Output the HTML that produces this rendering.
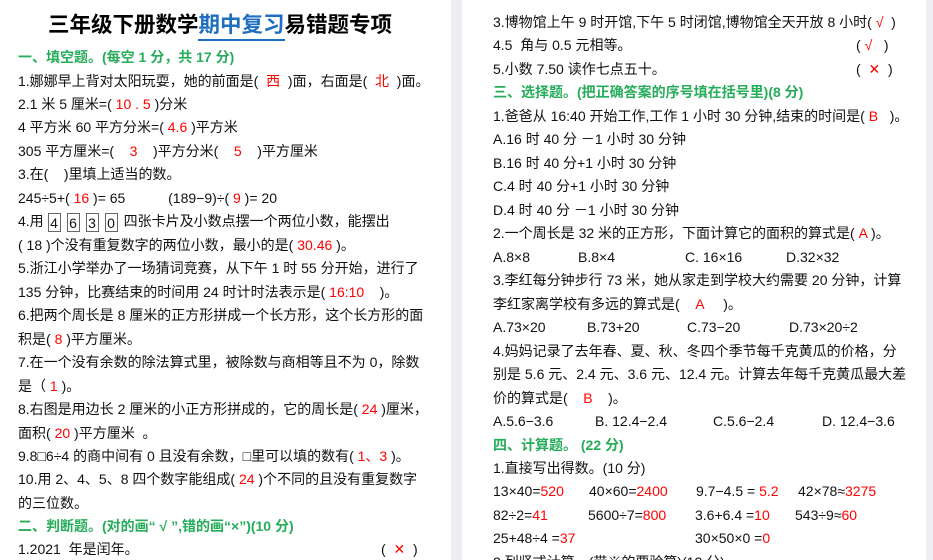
<!DOCTYPE html>
<html><head><meta charset="utf-8"><style>
*{margin:0;padding:0;box-sizing:border-box}
html,body{width:933px;height:560px;overflow:hidden}
body{background:#eeeef2;font-family:"Liberation Sans","Noto Sans CJK SC",sans-serif;font-size:14px;color:#111;position:relative}
.pg{position:absolute;top:0;height:560px;background:#fff}
.l{position:absolute;white-space:pre;line-height:24px;height:24px}
.r{color:#f00}
.g{color:#25ad5a;font-weight:bold}
.card{display:inline-block;border:1px solid #666;width:13px;height:19px;line-height:18px;text-align:center;vertical-align:middle;margin-right:6px}
h1{position:absolute;left:0;width:440px;top:8px;text-align:center;font-size:21.5px;font-weight:bold;line-height:32px;font-family:"Noto Sans CJK SC",sans-serif;color:#000}
h1 span{color:#1f6fc0;border-bottom:2px solid #1f6fc0}
</style></head><body>
<div class="pg" style="left:0;width:451px"></div>
<div class="pg" style="left:462px;width:464px"></div>
<h1>三年级下册数学<span>期中复习</span>易错题专项</h1>
<div class="l g" style="left:18px;top:45px">一、填空题。(每空 1 分，共 17 分)</div>
<div class="l" style="left:18px;top:69px">1.娜娜早上背对太阳玩耍，她的前面是(  <span class="r">西</span>  )面，右面是(  <span class="r">北</span>  )面。</div>
<div class="l" style="left:18px;top:92px">2.1 米 5 厘米=( <span class="r">10 . 5</span> )分米</div>
<div class="l" style="left:18px;top:115px">4 平方米 60 平方分米=( <span class="r">4.6</span> )平方米</div>
<div class="l" style="left:18px;top:139px">305 平方厘米=(    <span class="r">3</span>    )平方分米(    <span class="r">5</span>    )平方厘米</div>
<div class="l" style="left:18px;top:162px">3.在(    )里填上适当的数。</div>
<div class="l" style="left:18px;top:186px">245÷5+( <span class="r">16</span> )= 65           (189−9)÷( <span class="r">9</span> )= 20</div>
<div class="l" style="left:18px;top:209px">4.用 <span class="card">4</span><span class="card">6</span><span class="card">3</span><span class="card">0</span>四张卡片及小数点摆一个两位小数，能摆出</div>
<div class="l" style="left:18px;top:233px">( 18 )个没有重复数字的两位小数，最小的是( <span class="r">30.46</span> )。</div>
<div class="l" style="left:18px;top:256px">5.浙江小学举办了一场猜词竞赛，从下午 1 时 55 分开始，进行了</div>
<div class="l" style="left:18px;top:280px">135 分钟，比赛结束的时间用 24 时计时法表示是( <span class="r">16:10</span>    )。</div>
<div class="l" style="left:18px;top:303px">6.把两个周长是 8 厘米的正方形拼成一个长方形，这个长方形的面</div>
<div class="l" style="left:18px;top:327px">积是( <span class="r">8</span> )平方厘米。</div>
<div class="l" style="left:18px;top:350px">7.在一个没有余数的除法算式里，被除数与商相等且不为 0，除数</div>
<div class="l" style="left:18px;top:374px">是（ <span class="r">1</span> )。</div>
<div class="l" style="left:18px;top:397px">8.右图是用边长 2 厘米的小正方形拼成的，它的周长是( <span class="r">24</span> )厘米，</div>
<div class="l" style="left:18px;top:421px">面积( <span class="r">20</span> )平方厘米  。</div>
<div class="l" style="left:18px;top:444px">9.8□6÷4 的商中间有 0 且没有余数，□里可以填的数有( <span class="r">1、3</span> )。</div>
<div class="l" style="left:18px;top:467px">10.用 2、4、5、8 四个数字能组成( <span class="r">24</span> )个不同的且没有重复数字</div>
<div class="l" style="left:18px;top:491px">的三位数。</div>
<div class="l g" style="left:18px;top:514px">二、判断题。(对的画“ √ ”,错的画“×”)(10 分)</div>
<div class="l" style="left:18px;top:537px">1.2021  年是闰年。</div>
<div class="l" style="left:381px;top:537px">(  <span class="r">✕</span>  )</div>

<div class="l" style="left:493px;top:10px">3.博物馆上午 9 时开馆,下午 5 时闭馆,博物馆全天开放 8 小时( <span class="r">√</span>  )</div>
<div class="l" style="left:493px;top:33px">4.5  角与 0.5 元相等。</div>
<div class="l" style="left:856px;top:33px">( <span class="r">√</span>   )</div>
<div class="l" style="left:493px;top:57px">5.小数 7.50 读作七点五十。</div>
<div class="l" style="left:856px;top:57px">(  <span class="r">✕</span>  )</div>
<div class="l g" style="left:493px;top:80px">三、选择题。(把正确答案的序号填在括号里)(8 分)</div>
<div class="l" style="left:493px;top:104px">1.爸爸从 16:40 开始工作,工作 1 小时 30 分钟,结束的时间是( <span class="r">B</span>   )。</div>
<div class="l" style="left:493px;top:127px">A.16 时 40 分 －1 小时 30 分钟</div>
<div class="l" style="left:493px;top:151px">B.16 时 40 分+1 小时 30 分钟</div>
<div class="l" style="left:493px;top:174px">C.4 时 40 分+1 小时 30 分钟</div>
<div class="l" style="left:493px;top:198px">D.4 时 40 分 －1 小时 30 分钟</div>
<div class="l" style="left:493px;top:221px">2.一个周长是 32 米的正方形，下面计算它的面积的算式是( <span class="r">A</span> )。</div>
<div class="l" style="left:493px;top:245px">A.8×8</div><div class="l" style="left:578px;top:245px">B.8×4</div><div class="l" style="left:685px;top:245px">C. 16×16</div><div class="l" style="left:786px;top:245px">D.32×32</div>
<div class="l" style="left:493px;top:268px">3.李红每分钟步行 73 米，她从家走到学校大约需要 20 分钟，计算</div>
<div class="l" style="left:493px;top:292px">李红家离学校有多远的算式是(    <span class="r">A</span>     )。</div>
<div class="l" style="left:493px;top:315px">A.73×20</div><div class="l" style="left:587px;top:315px">B.73+20</div><div class="l" style="left:687px;top:315px">C.73−20</div><div class="l" style="left:789px;top:315px">D.73×20÷2</div>
<div class="l" style="left:493px;top:339px">4.妈妈记录了去年春、夏、秋、冬四个季节每千克黄瓜的价格，分</div>
<div class="l" style="left:493px;top:362px">别是 5.6 元、2.4 元、3.6 元、12.4 元。计算去年每千克黄瓜最大差</div>
<div class="l" style="left:493px;top:386px">价的算式是(    <span class="r">B</span>    )。</div>
<div class="l" style="left:493px;top:409px">A.5.6−3.6</div><div class="l" style="left:595px;top:409px">B. 12.4−2.4</div><div class="l" style="left:713px;top:409px">C.5.6−2.4</div><div class="l" style="left:822px;top:409px">D. 12.4−3.6</div>
<div class="l g" style="left:493px;top:433px">四、计算题。 (22 分)</div>
<div class="l" style="left:493px;top:456px">1.直接写出得数。(10 分)</div>
<div class="l" style="left:493px;top:479px">13×40=<span class="r">520</span></div><div class="l" style="left:589px;top:479px">40×60=<span class="r">2400</span></div><div class="l" style="left:696px;top:479px">9.7−4.5 = <span class="r">5.2</span></div><div class="l" style="left:798px;top:479px">42×78≈<span class="r">3275</span></div>
<div class="l" style="left:493px;top:503px">82÷2=<span class="r">41</span></div><div class="l" style="left:588px;top:503px">5600÷7=<span class="r">800</span></div><div class="l" style="left:695px;top:503px">3.6+6.4 =<span class="r">10</span></div><div class="l" style="left:795px;top:503px">543÷9≈<span class="r">60</span></div>
<div class="l" style="left:493px;top:526px">25+48÷4 =<span class="r">37</span></div><div class="l" style="left:695px;top:526px">30×50×0 =<span class="r">0</span></div>
<div class="l" style="left:493px;top:550px">2.列竖式计算。(带※的要验算)(12 分)</div>
</body></html>
